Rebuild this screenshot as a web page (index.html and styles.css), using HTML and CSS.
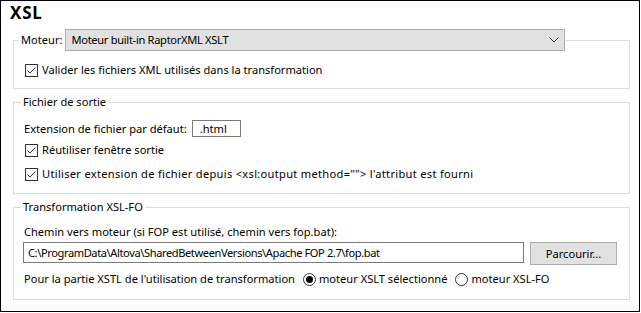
FILE: index.html
```html
<!DOCTYPE html>
<html lang="fr">
<head>
    <meta charset="UTF-8">
    <title>XSL</title>
    <link rel="stylesheet" href="styles.css">
</head>
<body>
    <div class="panel">
        <h1 class="title">XSL</h1>

        <fieldset class="group group-engine">
            <legend class="engine-legend">
                <span class="engine-label">Moteur:</span>
                <div class="combo">
                    <span class="combo-text">Moteur built-in RaptorXML XSLT</span>
                    <svg class="chevron" width="10" height="6" viewBox="0 0 10 6"><path d="M0.5 0.5 L5 5 L9.5 0.5" fill="none" stroke="#404040" stroke-width="1"/></svg>
                </div>
            </legend>
            <label class="check">
                <svg class="box" width="13" height="13" viewBox="0 0 13 13"><rect x="0.5" y="0.5" width="12" height="12" fill="#fff" stroke="#333"/><path d="M2.5 6.5 L5 9 L10.5 3.5" fill="none" stroke="#333" stroke-width="1"/></svg>
                Valider les fichiers XML utilisés dans la transformation
            </label>
        </fieldset>

        <fieldset class="group group-output">
            <legend>Fichier de sortie</legend>
            <div class="row ext-row">
                <span>Extension de fichier par défaut:</span>
                <div class="field ext-field">.html</div>
            </div>
            <label class="check row">
                <svg class="box" width="13" height="13" viewBox="0 0 13 13"><rect x="0.5" y="0.5" width="12" height="12" fill="#fff" stroke="#333"/><path d="M2.5 6.5 L5 9 L10.5 3.5" fill="none" stroke="#333" stroke-width="1"/></svg>
                Réutiliser fenêtre sortie
            </label>
            <label class="check row row-last">
                <svg class="box" width="13" height="13" viewBox="0 0 13 13"><rect x="0.5" y="0.5" width="12" height="12" fill="#fff" stroke="#333"/><path d="M2.5 6.5 L5 9 L10.5 3.5" fill="none" stroke="#333" stroke-width="1"/></svg>
                <span class="wide-text">Utiliser extension de fichier depuis &lt;xsl:output method=""&gt; l'attribut est fourni</span>
            </label>
        </fieldset>

        <fieldset class="group group-fo">
            <legend>Transformation XSL-FO</legend>
            <div class="fo-label">Chemin vers moteur (si FOP est utilisé, chemin vers fop.bat):</div>
            <div class="path-row">
                <div class="field path-field">C:\ProgramData\Altova\SharedBetweenVersions\Apache FOP 2.7\fop.bat</div>
                <div class="button">Parcourir...</div>
            </div>
            <div class="radio-row">
                <span>Pour la partie XSTL de l'utilisation de transformation</span>
                <label class="radio">
                    <svg width="13" height="13" viewBox="0 0 13 13"><circle cx="6.5" cy="6.5" r="6" fill="#fff" stroke="#333"/><circle cx="6.5" cy="6.5" r="3.5" fill="#000"/></svg>
                    moteur XSLT sélectionné
                </label>
                <label class="radio">
                    <svg width="13" height="13" viewBox="0 0 13 13"><circle cx="6.5" cy="6.5" r="6" fill="#fff" stroke="#333"/></svg>
                    moteur XSL-FO
                </label>
            </div>
        </fieldset>
    </div>
</body>
</html>
```

FILE: styles.css
```css
body {
    margin: 0;
    background: #fff;
    font-family: "Noto Sans", sans-serif;
    font-size: 11.1px;
    color: #000;
}

.panel {
    width: 640px;
    height: 312px;
    box-sizing: border-box;
    border: 1px solid #000;
    padding: 0 9px 0 12px;
}

.title {
    margin: 2px 0 0 -3px;
    font-size: 17px;
    line-height: 20px;
    font-weight: bold;
    letter-spacing: 0.8px;
}

.group {
    margin: 5px 0 0 0;
    padding: 0 8px 0 9px;
    border: 1px solid #dcdcdc;
    min-width: 0;
}

.group legend {
    padding: 0 2px;
    margin-left: -2px;
    line-height: 16px;
}

.group-engine {
    margin-top: 6px;
    padding-top: 11px;
    padding-bottom: 10px;
}

.group-engine .engine-legend {
    display: flex;
    align-items: center;
    gap: 3px;
    margin-left: -4px;
    padding: 0 1px 0 2px;
}

.combo {
    width: 500px;
    height: 22px;
    box-sizing: border-box;
    border: 1px solid #adadad;
    background: #e1e1e1;
    display: flex;
    align-items: center;
    justify-content: space-between;
    padding: 0 5px 0 5px;
}

.combo-text {
    letter-spacing: -0.3px;
}

.chevron {
    display: block;
}

.check {
    display: flex;
    align-items: center;
    gap: 4px;
    padding-left: 2px;
    line-height: 16px;
}

.box {
    flex: none;
    display: block;
}

.wide-text {
    letter-spacing: 0.3px;
}

.group-output {
    padding-top: 7px;
    padding-bottom: 8px;
}

.row {
    height: 22px;
    display: flex;
    align-items: center;
}

.ext-row {
    padding-left: 1px;
    gap: 5px;
}

.row-last {
    margin-top: 2px;
}

.field {
    box-sizing: border-box;
    border: 1px solid #7a7a7a;
    background: #fff;
    line-height: 15px;
    padding: 0 5px;
    white-space: nowrap;
    overflow: hidden;
}

.ext-field {
    width: 49px;
    height: 17px;
    padding: 0 7px;
}

.group-fo {
    padding-top: 9px;
    padding-bottom: 12px;
}

.fo-label {
    padding-left: 1px;
    line-height: 16px;
}

.path-row {
    margin-top: 2px;
    display: flex;
    align-items: flex-start;
    gap: 6px;
}

.path-field {
    width: 501px;
    height: 21px;
    line-height: 19px;
    padding: 0 4px;
    letter-spacing: -0.4px;
}

.button {
    width: 87px;
    height: 23px;
    box-sizing: border-box;
    border: 1px solid #adadad;
    background: #e1e1e1;
    text-align: center;
    line-height: 21px;
}

.radio-row {
    margin-top: 6px;
    padding-left: 1px;
    display: flex;
    align-items: center;
    line-height: 16px;
}

.radio {
    display: flex;
    align-items: center;
    gap: 3px;
    margin-left: 8px;
}

.radio svg {
    display: block;
}
```
